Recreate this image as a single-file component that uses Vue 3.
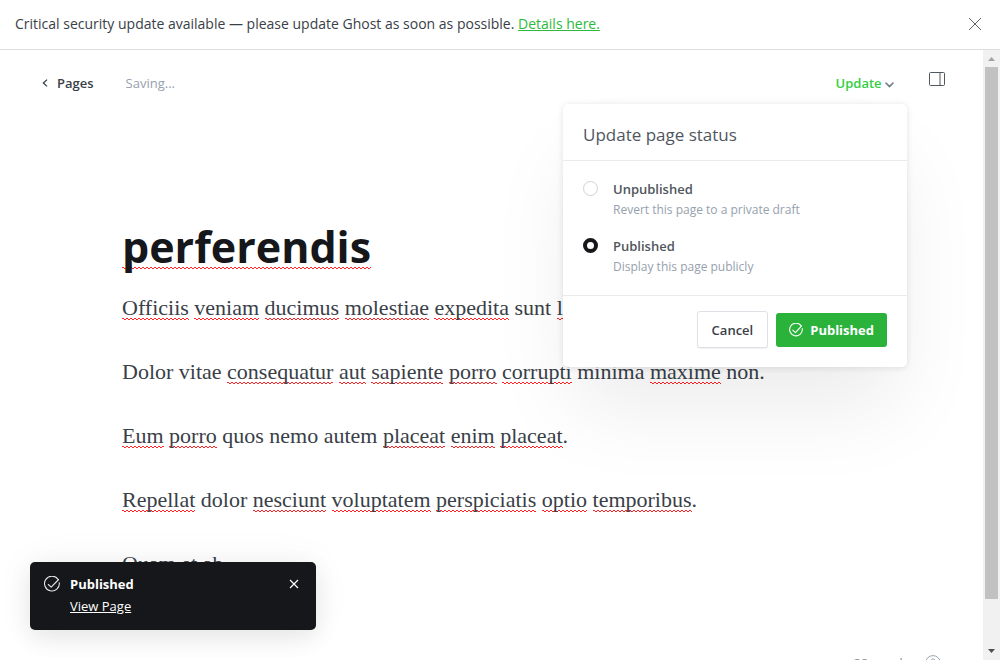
<script setup>
import { ref } from 'vue'

const title = 'perferendis'
const status = ref('published')

const options = [
  { value: 'unpublished', label: 'Unpublished', hint: 'Revert this page to a private draft' },
  { value: 'published', label: 'Published', hint: 'Display this page publicly' },
]

// Words wrapped in asterisks are flagged by the spell checker.
const paragraphs = [
  '*Officiis* *veniam* *ducimus* *molestiae* *expedita* sunt *laborum*.',
  'Dolor vitae *consequatur* *aut* *sapiente* *porro* *corrupti* minima *maxime* non.',
  '*Eum* *porro* quos nemo autem *placeat* *enim* *placeat*.',
  '*Repellat* dolor *nesciunt* *voluptatem* *perspiciatis* *optio* *temporibus*.',
  'Quam et ab.',
].map((text) => text.split('*').map((part, i) => ({ text: part, flagged: i % 2 === 1 })))
</script>

<template>
  <div class="app">
    <aside class="alert">
      <p>Critical security update available — please update Ghost as soon as possible. <a href="#">Details here.</a></p>
      <button type="button" class="icon-btn" aria-label="Dismiss alert">
        <svg width="14" height="14" viewBox="0 0 14 14" fill="none" stroke="#5d646b"><path d="M1 1l12 12M13 1L1 13" /></svg>
      </button>
    </aside>

    <div class="workspace">
      <main class="editor">
        <header class="toolbar">
          <a href="#" class="back">
            <svg width="6" height="8" viewBox="0 0 6 8" fill="none" stroke="#394047" stroke-width="1.3"><path d="M5 .6L1.4 4 5 7.4" /></svg>
            Pages
          </a>
          <span class="saving">Saving...</span>
          <div class="publish">
            <button type="button" class="trigger">
              Update
              <svg width="9" height="6" viewBox="0 0 9 6" fill="none" stroke="#727c87" stroke-width="1.6" stroke-linecap="round"><path d="M1 1l3.5 3.6L8 1" /></svg>
            </button>

            <form class="popup" @submit.prevent>
              <h2>Update page status</h2>
              <div class="options">
                <div v-for="o in options" :key="o.value" class="option">
                  <input :id="o.value" v-model="status" type="radio" name="status" :value="o.value" />
                  <label :for="o.value">
                    <strong>{{ o.label }}</strong>
                    <span>{{ o.hint }}</span>
                  </label>
                </div>
              </div>
              <footer>
                <button type="button" class="cancel">Cancel</button>
                <button type="submit" class="confirm">
                  <svg width="14" height="14" viewBox="0 0 14 14" fill="none" stroke="#fff" stroke-width="1.1" stroke-linecap="round" stroke-linejoin="round"><path d="M11.9 2.6A6.3 6.3 0 1 0 13.2 5.6" /><path d="M3.8 7.2l2.6 2.4 6.2-6.8" /></svg>
                  Published
                </button>
              </footer>
            </form>
          </div>
          <button type="button" class="icon-btn" aria-label="Settings">
            <svg width="16" height="14" viewBox="0 0 16 14" fill="none" stroke="#50585f"><rect x=".5" y=".5" width="15" height="13" rx="1" /><path d="M11 .5v13" /></svg>
          </button>
        </header>

        <article class="content">
          <h1><span class="flagged">{{ title }}</span></h1>
          <p v-for="(parts, i) in paragraphs" :key="i"><span v-for="(part, j) in parts" :key="j" :class="{ flagged: part.flagged }">{{ part.text }}</span></p>
        </article>

        <div class="stats">
          <span>28 words</span>
          <svg width="16" height="16" viewBox="0 0 16 16" fill="none" stroke="#9aa3b0"><circle cx="8" cy="8" r="7.4" /><path d="M5.8 6.2c0-3 4.4-2.8 4.4-.2 0 1.5-2.2 1.5-2.2 3.2M8 10.8v1" /></svg>
        </div>
      </main>

      <div class="scrollbar" aria-hidden="true">
        <svg width="17" height="17" viewBox="0 0 17 17"><path d="M5 11l3.5-4L12 11z" fill="#a3a3a3" /></svg>
        <div class="track"><div class="thumb"></div></div>
        <svg width="17" height="17" viewBox="0 0 17 17"><path d="M5 6l3.5 4L12 6z" fill="#505050" /></svg>
      </div>
    </div>

    <div class="toast" role="status">
      <svg width="16" height="16" viewBox="0 0 16 16" fill="none" stroke="#e3e5e7" stroke-width="1.1" stroke-linecap="round" stroke-linejoin="round"><path d="M14 3.3A7.4 7.4 0 1 0 15.3 6.7" /><path d="M4.3 8.5l2.9 2.7 7.4-7.7" /></svg>
      <div class="message">
        <strong>Published</strong>
        <a href="#">View Page</a>
      </div>
      <button type="button" class="icon-btn" aria-label="Close notification">
        <svg width="10" height="10" viewBox="0 0 10 10" fill="none" stroke="#fff" stroke-width="1.2"><path d="M1 1l8 8M9 1L1 9" /></svg>
      </button>
    </div>
  </div>
</template>

<style>
body {
  margin: 0;
  overflow: hidden;
}
</style>

<style scoped>
.app {
  position: relative;
  display: flex;
  flex-direction: column;
  height: 100vh;
  overflow: hidden;
  background: #fff;
  color: #394047;
  font-family: "Open Sans", "Noto Sans", sans-serif;
  font-size: 13px;
  line-height: 20px;
}
button {
  border: 0;
  padding: 0;
  background: none;
  color: inherit;
  font: inherit;
  cursor: pointer;
}
.icon-btn {
  display: flex;
}
h1, h2, p {
  margin: 0;
}
strong {
  font-weight: 600;
}

.alert {
  display: flex;
  align-items: center;
  justify-content: space-between;
  padding: 14px 18px 15px 15px;
  border-bottom: 1px solid #dddddf;
  font-size: 14px;
}
.alert a {
  color: #2bba3c;
}

.workspace {
  display: flex;
  flex: 1;
  min-height: 0;
}
.editor {
  position: relative;
  flex: 1;
  overflow: hidden;
}
.toolbar {
  display: flex;
  align-items: center;
  padding: 22px 38px 0 42px;
}
.back {
  display: flex;
  align-items: center;
  gap: 9px;
  color: inherit;
  font-weight: 600;
  text-decoration: none;
}
.saving {
  margin-left: 32px;
  color: #95a1ad;
}
.publish {
  position: relative;
  z-index: 1;
  margin-left: auto;
  margin-right: 35px;
}
.trigger {
  color: #30cf43;
  font-weight: 600;
}
.toolbar > .icon-btn {
  margin-bottom: 8px;
}

.popup {
  position: absolute;
  top: 31px;
  right: -13px;
  width: 344px;
  border-radius: 5px;
  background: #fff;
  box-shadow: 0 0 7px rgba(0, 0, 0, 0.08), 0 2px 6px rgba(0, 0, 0, 0.04), 0 50px 80px -10px rgba(0, 0, 0, 0.08);
}
.popup h2 {
  padding: 19px 20px 13px;
  border-bottom: 1px solid #e8eaec;
  color: #50565d;
  font-size: 17px;
  font-weight: 400;
  line-height: 24px;
}
.options {
  display: grid;
  gap: 16px;
  padding: 18px 20px;
}
.option {
  display: flex;
  gap: 15px;
}
.option input {
  appearance: none;
  box-sizing: border-box;
  width: 15px;
  height: 15px;
  margin: 2px 0 0;
  border: 1px solid #ced4d9;
  border-radius: 50%;
  background: #fff;
}
.option input:checked {
  border: 4px solid #15171a;
}
.option label {
  display: grid;
  gap: 1px;
  color: #50565d;
}
.option span {
  color: #95a1ad;
  font-size: 12px;
}
.popup footer {
  display: flex;
  align-items: center;
  justify-content: flex-end;
  gap: 8px;
  padding: 15px 20px 19px;
  border-top: 1px solid #e8eaec;
}
.cancel {
  padding: 8px 14px 7px;
  border: 1px solid #dde1e5;
  border-radius: 3px;
  background: #fff;
  box-shadow: 0 1px 1px rgba(0, 0, 0, 0.06);
  font-weight: 600;
}
.confirm {
  display: flex;
  align-items: center;
  gap: 7px;
  padding: 7px 13px;
  border-radius: 3px;
  background: #2ab23a;
  color: #fff;
  font-weight: 700;
}

.content {
  max-width: 739px;
  margin: 0 auto;
  padding-top: 121px;
}
.content h1 {
  margin-bottom: 14px;
  color: #15171a;
  font-size: 43px;
  font-weight: 700;
  line-height: 63px;
}
.content p {
  margin-bottom: 32px;
  font-family: "Liberation Serif", serif;
  font-size: 22px;
  line-height: 32px;
}
.flagged {
  background-image:
    repeating-linear-gradient(90deg, #f22 0 2px, transparent 2px 4px),
    repeating-linear-gradient(90deg, transparent 0 2px, #f22 2px 4px);
  background-repeat: no-repeat;
  background-size: 100% 1px;
  background-position: 0 calc(100% - 1px), 0 100%;
}
h1 .flagged {
  background-position: 0 calc(100% - 8px), 0 calc(100% - 7px);
}

.stats {
  position: absolute;
  right: 42px;
  bottom: -13px;
  display: flex;
  align-items: center;
  gap: 16px;
  color: #8492a0;
}

.scrollbar {
  display: flex;
  flex-direction: column;
  width: 17px;
  background: #f1f1f1;
}
.scrollbar svg {
  display: block;
}
.track {
  flex: 1;
  padding: 0 2px;
}
.thumb {
  height: 92.4%;
  background: #c1c1c1;
}

.toast {
  position: absolute;
  z-index: 2;
  left: 30px;
  bottom: 30px;
  display: flex;
  align-items: flex-start;
  box-sizing: border-box;
  width: 286px;
  padding: 12px 17px 13px 14px;
  border-radius: 5px;
  background: #15171a;
  color: #fff;
  box-shadow: 0 8px 24px rgba(0, 0, 0, 0.08), 0 0 40px rgba(0, 0, 0, 0.05);
}
.toast > svg {
  margin: 2px 10px 0 0;
}
.message {
  display: grid;
  flex: 1;
  gap: 1px;
  line-height: 21px;
}
.message strong {
  font-weight: 700;
}
.message a {
  color: #fff;
}
.toast .icon-btn {
  margin-top: 5px;
}
</style>
